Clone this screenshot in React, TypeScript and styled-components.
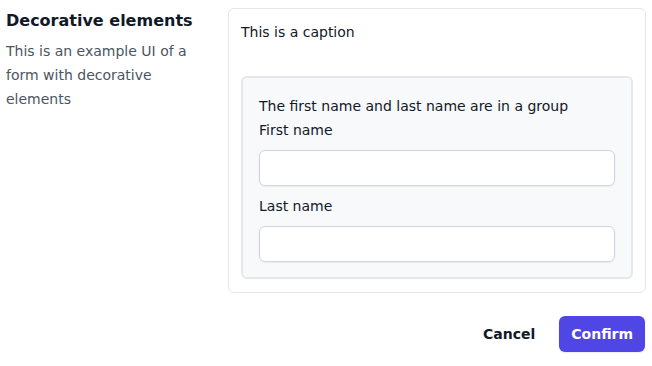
import React from "react";
import styled, { createGlobalStyle } from "styled-components";

const GlobalStyle = createGlobalStyle`
    html, body {
        margin: 0;
        padding: 0;
        background: #ffffff;
        font-family: "DejaVu Sans", "Liberation Sans", sans-serif;
        color: #111827;
    }
    * {
        box-sizing: border-box;
    }
`;

const Page = styled.form`
    padding: 8px 6px 8px 6px;
    display: flex;
    flex-direction: column;
    gap: 23px;
`;

const Layout = styled.div`
    display: grid;
    grid-template-columns: 198px 1fr;
    gap: 24px;
`;

const Intro = styled.div`
    display: flex;
    flex-direction: column;
    gap: 5px;
`;

const Title = styled.h2`
    margin: 0;
    font-size: 16px;
    line-height: 26px;
    font-weight: 700;
    color: #111827;
`;

const Description = styled.p`
    margin: 0;
    font-size: 14px;
    line-height: 24px;
    color: #4b5563;
`;

const Card = styled.div`
    border: 1px solid #e5e7eb;
    border-radius: 6px;
    padding: 13px 12px;
    display: flex;
    flex-direction: column;
    gap: 34px;
`;

const Caption = styled.p`
    margin: 0;
    font-size: 14px;
    line-height: 20px;
    color: #111827;
`;

const Group = styled.fieldset`
    margin: 0;
    border: 2px solid #e5e7eb;
    border-radius: 6px;
    background: #f8f9fb;
    padding: 18px 16px 15px;
    display: flex;
    flex-direction: column;
    min-width: 0;
`;

const GroupTitle = styled.div`
    font-size: 14px;
    line-height: 20px;
    color: #111827;
    margin-bottom: 4px;
`;

const Field = styled.label`
    display: flex;
    flex-direction: column;
    gap: 10px;
    & + & {
        margin-top: 10px;
    }
`;

const Label = styled.span`
    font-size: 14px;
    line-height: 20px;
    color: #111827;
`;

const Input = styled.input`
    height: 36px;
    width: 100%;
    border: 1px solid #d1d5db;
    border-radius: 6px;
    background: #ffffff;
    box-shadow: 0 1px 2px rgba(0, 0, 0, 0.06);
    padding: 0 12px;
    font: inherit;
    font-size: 14px;
    outline: none;
`;

const Actions = styled.div`
    display: flex;
    justify-content: flex-end;
    align-items: center;
    gap: 12px;
    padding-right: 1px;
`;

const Button = styled.button<{ $primary?: boolean }>`
    height: 36px;
    padding: 0 12px;
    border: none;
    border-radius: 6px;
    font-family: inherit;
    font-size: 14px;
    font-weight: 700;
    cursor: pointer;
    background: ${(p) => (p.$primary ? "#4f46e5" : "transparent")};
    color: ${(p) => (p.$primary ? "#ffffff" : "#111827")};
    box-shadow: ${(p) => (p.$primary ? "0 1px 2px rgba(0,0,0,0.08)" : "none")};
`;

const App = () => {
    return (
        <>
            <GlobalStyle />
            <Page onSubmit={(e) => e.preventDefault()}>
                <Layout>
                    <Intro>
                        <Title>Decorative elements</Title>
                        <Description>This is an example UI of a form with decorative elements</Description>
                    </Intro>
                    <Card>
                        <Caption>This is a caption</Caption>
                        <Group>
                            <GroupTitle>The first name and last name are in a group</GroupTitle>
                            <Field>
                                <Label>First name</Label>
                                <Input type="text" />
                            </Field>
                            <Field>
                                <Label>Last name</Label>
                                <Input type="text" />
                            </Field>
                        </Group>
                    </Card>
                </Layout>
                <Actions>
                    <Button type="button">Cancel</Button>
                    <Button type="submit" $primary>
                        Confirm
                    </Button>
                </Actions>
            </Page>
        </>
    );
};

export default App;
